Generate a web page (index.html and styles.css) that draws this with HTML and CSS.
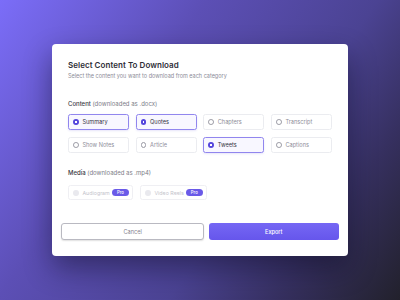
FILE: index.html
```html
<!DOCTYPE html>
<html>
<head>
<meta charset="utf-8">
<link rel="stylesheet" href="styles.css">
</head>
<body>
<div class="stage">
  <div class="modal">
    <div class="body">
      <h1 class="title">Select Content To Download</h1>
      <p class="subtitle">Select the content you want to download from each category</p>

      <div class="section-head"><strong>Content</strong> (downloaded as .docx)</div>
      <div class="grid">
        <div class="opt on"><span class="radio"></span>Summary</div>
        <div class="opt on"><span class="radio"></span>Quotes</div>
        <div class="opt"><span class="radio"></span>Chapters</div>
        <div class="opt"><span class="radio"></span>Transcript</div>
        <div class="opt"><span class="radio"></span>Show Notes</div>
        <div class="opt"><span class="radio"></span>Article</div>
        <div class="opt on"><span class="radio"></span>Tweets</div>
        <div class="opt"><span class="radio"></span>Captions</div>
      </div>

      <div class="section-head media-head"><strong>Media</strong> (downloaded as .mp4)</div>
      <div class="media">
        <div class="mopt m1"><span class="radio dis"></span><span class="mlabel">Audiogram</span><span class="pro">Pro</span></div>
        <div class="mopt m2"><span class="radio dis"></span><span class="mlabel">Video Reels</span><span class="pro">Pro</span></div>
      </div>
    </div>
    <div class="footer">
      <button class="btn cancel">Cancel</button>
      <button class="btn export">Export</button>
    </div>
  </div>
</div>
</body>
</html>
```

FILE: styles.css
```css
* { box-sizing: border-box; margin: 0; padding: 0; }
html, body { width: 400px; height: 300px; overflow: hidden; }
body {
  font-family: "Inter", "Liberation Sans", sans-serif;
  background: linear-gradient(125deg, #7b6df8 0%, #5c4fb5 34%, #4b4393 62%, #363060 80%, #22212c 100%);
}
.stage { padding: 44px 52px; }
.modal {
  width: 296px;
  height: 212px;
  background: #ffffff;
  border-radius: 4px;
  box-shadow: 0 12px 28px rgba(10, 8, 30, 0.45);
  display: flex;
  flex-direction: column;
}
.body { padding: 16px 16px 0 16px; }
.title {
  font-size: 8px;
  line-height: 10px;
  font-weight: 600;
  color: #2e2e38;
  letter-spacing: 0.05px;
}
.subtitle {
  margin-top: 2px;
  font-size: 5.5px;
  line-height: 8px;
  color: #8c8c98;
}
.section-head {
  margin-top: 20px;
  font-size: 6px;
  line-height: 8px;
  color: #7d7d88;
}
.section-head strong { font-weight: 500; color: #3a3a44; }
.grid {
  margin-top: 6px;
  display: grid;
  grid-template-columns: repeat(4, 61px);
  column-gap: 6.7px;
  row-gap: 6.6px;
}
.opt {
  height: 16.4px;
  border: 0.8px solid #ebecf0;
  border-radius: 2.5px;
  display: flex;
  align-items: center;
  gap: 3.6px;
  padding-left: 4px;
  font-size: 5.6px;
  color: #8e8e99;
}
.opt.on {
  border: 1px solid #9186ee;
  background: #f8f7ff;
  color: #34343e;
  box-shadow: 0 1px 2px rgba(100, 90, 220, 0.15);
}
.radio {
  width: 5.8px;
  height: 5.8px;
  border-radius: 50%;
  border: 0.8px solid #9a9aa4;
  flex: none;
}
.opt.on .radio {
  border: none;
  background: radial-gradient(circle, #ffffff 0 0.9px, #5546dc 1.1px);
}
.radio.dis {
  border: none;
  background: #e9e9ee;
}
.media-head { margin-top: 16px; }
.media {
  margin-top: 8px;
  display: flex;
  gap: 6.6px;
}
.mopt {
  height: 14.7px;
  border: 0.8px solid #efeff3;
  border-radius: 2.5px;
  display: flex;
  align-items: center;
  padding-left: 4px;
  font-size: 5.3px;
  color: #c4c4cc;
}
.m1 { width: 65.4px; }
.m2 { width: 67.4px; }
.mlabel { margin-left: 3.6px; }
.pro {
  margin-left: auto;
  margin-right: 3.4px;
  width: 17.3px;
  height: 7.3px;
  border-radius: 4px;
  background: #6a5ae8;
  color: #ffffff;
  font-size: 4.3px;
  font-weight: 500;
  display: flex;
  align-items: center;
  justify-content: center;
  flex: none;
}
.footer {
  margin-top: auto;
  padding: 0 9px 16px 9px;
  display: flex;
  gap: 4.6px;
}
.btn {
  height: 16.7px;
  border-radius: 3px;
  font-family: "Inter", "Liberation Sans", sans-serif;
  font-size: 5.6px;
  display: flex;
  align-items: center;
  justify-content: center;
}
.cancel {
  width: 143.4px;
  background: #ffffff;
  border: 0.9px solid #b9b9c1;
  color: #85858f;
  box-shadow: 0 1px 1.5px rgba(0, 0, 0, 0.12);
}
.export {
  width: 129.6px;
  border: none;
  background: linear-gradient(180deg, #7567f4 0%, #6656ec 100%);
  color: #ffffff;
  font-weight: 500;
}
```
